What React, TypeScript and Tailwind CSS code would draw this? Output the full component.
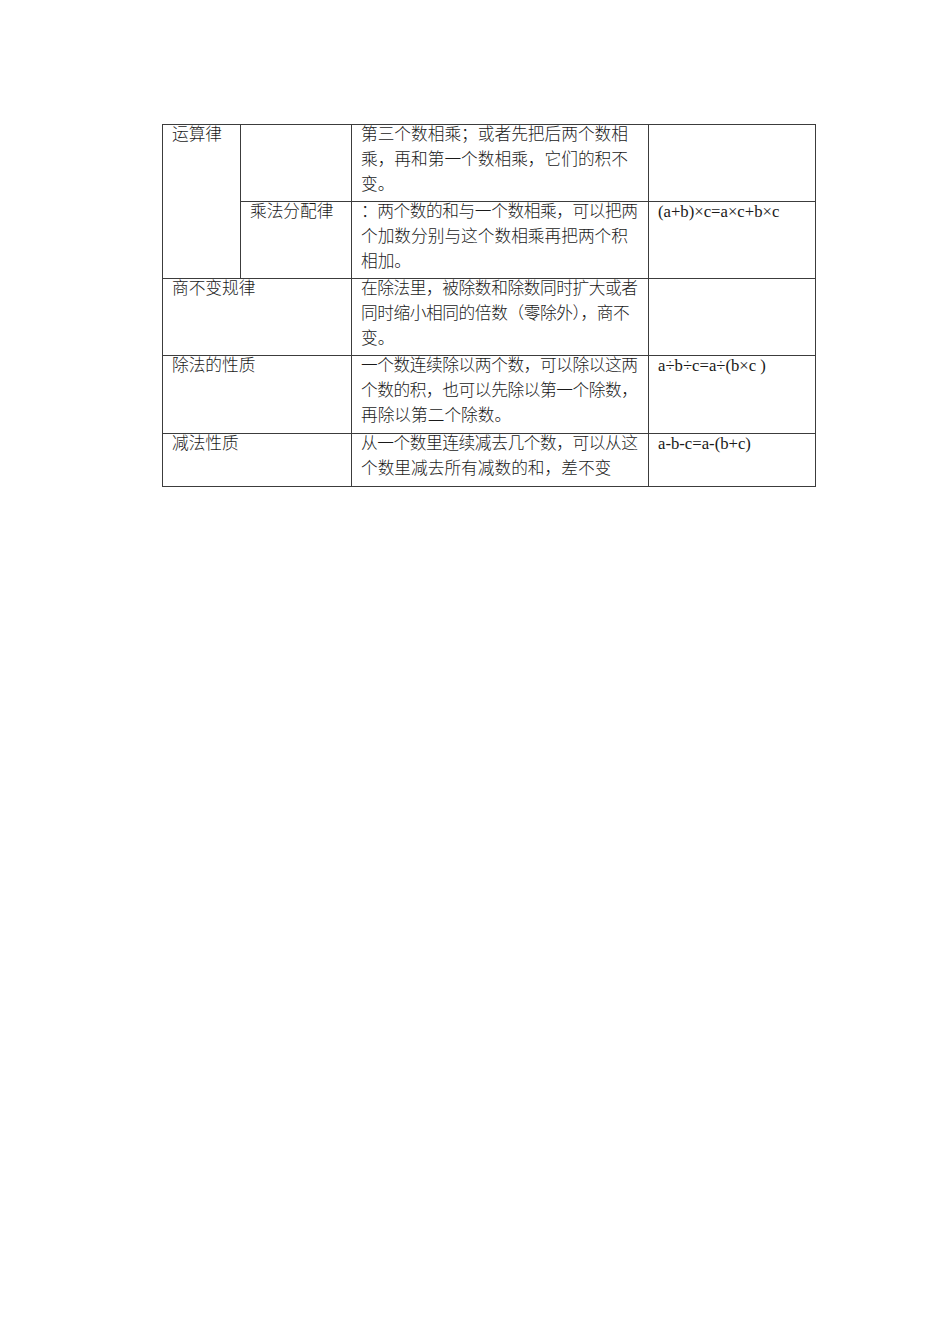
import React from "react";

const font = '"Liberation Serif", "Noto Sans CJK SC", serif';

function Lines({ lines }: { lines: { t: string; tight?: boolean }[] }) {
  return (
    <div className="-mt-[3px]">
      {lines.map((l, i) => (
        <div
          key={i}
          className={"whitespace-nowrap " + (l.tight ? "tracking-[-0.42px]" : "")}
        >
          {l.t}
        </div>
      ))}
    </div>
  );
}

export default function App() {
  const cell = "border border-[#3c3c3c] align-top px-[9px] p-0 overflow-visible";
  return (
    <div
      className="w-[950px] h-[1344px] bg-white text-[#1a1a1a] font-light pt-[124px] pl-[162px]"
      style={{ fontFamily: font }}
    >
      <table className="table-fixed border-collapse w-[654px] text-[16.7px] leading-[25px]">
        <colgroup>
          <col className="w-[78px]" />
          <col className="w-[111px]" />
          <col className="w-[297px]" />
          <col className="w-[167px]" />
        </colgroup>
        <tbody>
          <tr className="h-[77px]">
            <td className={cell} rowSpan={2}>
              <Lines lines={[{ t: "运算律" }]} />
            </td>
            <td className={cell}></td>
            <td className={cell}>
              <Lines
                lines={[
                  { t: "第三个数相乘；或者先把后两个数相" },
                  { t: "乘，再和第一个数相乘，它们的积不" },
                  { t: "变。" },
                ]}
              />
            </td>
            <td className={cell}></td>
          </tr>
          <tr className="h-[77px]">
            <td className={cell}>
              <Lines lines={[{ t: "乘法分配律" }]} />
            </td>
            <td className={cell}>
              <Lines
                lines={[
                  { t: "：两个数的和与一个数相乘，可以把两", tight: true },
                  { t: "个加数分别与这个数相乘再把两个积" },
                  { t: "相加。" },
                ]}
              />
            </td>
            <td className={cell}>
              <Lines lines={[{ t: "(a+b)×c=a×c+b×c" }]} />
            </td>
          </tr>
          <tr className="h-[77px]">
            <td className={cell} colSpan={2}>
              <Lines lines={[{ t: "商不变规律" }]} />
            </td>
            <td className={cell}>
              <Lines
                lines={[
                  { t: "在除法里，被除数和除数同时扩大或者", tight: true },
                  { t: "同时缩小相同的倍数（零除外），商不", tight: true },
                  { t: "变。" },
                ]}
              />
            </td>
            <td className={cell}></td>
          </tr>
          <tr className="h-[78px]">
            <td className={cell} colSpan={2}>
              <Lines lines={[{ t: "除法的性质" }]} />
            </td>
            <td className={cell}>
              <Lines
                lines={[
                  { t: "一个数连续除以两个数，可以除以这两", tight: true },
                  { t: "个数的积，也可以先除以第一个除数，", tight: true },
                  { t: "再除以第二个除数。" },
                ]}
              />
            </td>
            <td className={cell}>
              <Lines lines={[{ t: "a÷b÷c=a÷(b×c )" }]} />
            </td>
          </tr>
          <tr className="h-[53px]">
            <td className={cell} colSpan={2}>
              <Lines lines={[{ t: "减法性质" }]} />
            </td>
            <td className={cell}>
              <Lines
                lines={[
                  { t: "从一个数里连续减去几个数，可以从这", tight: true },
                  { t: "个数里减去所有减数的和，差不变" },
                ]}
              />
            </td>
            <td className={cell}>
              <Lines lines={[{ t: "a-b-c=a-(b+c)" }]} />
            </td>
          </tr>
        </tbody>
      </table>
    </div>
  );
}
